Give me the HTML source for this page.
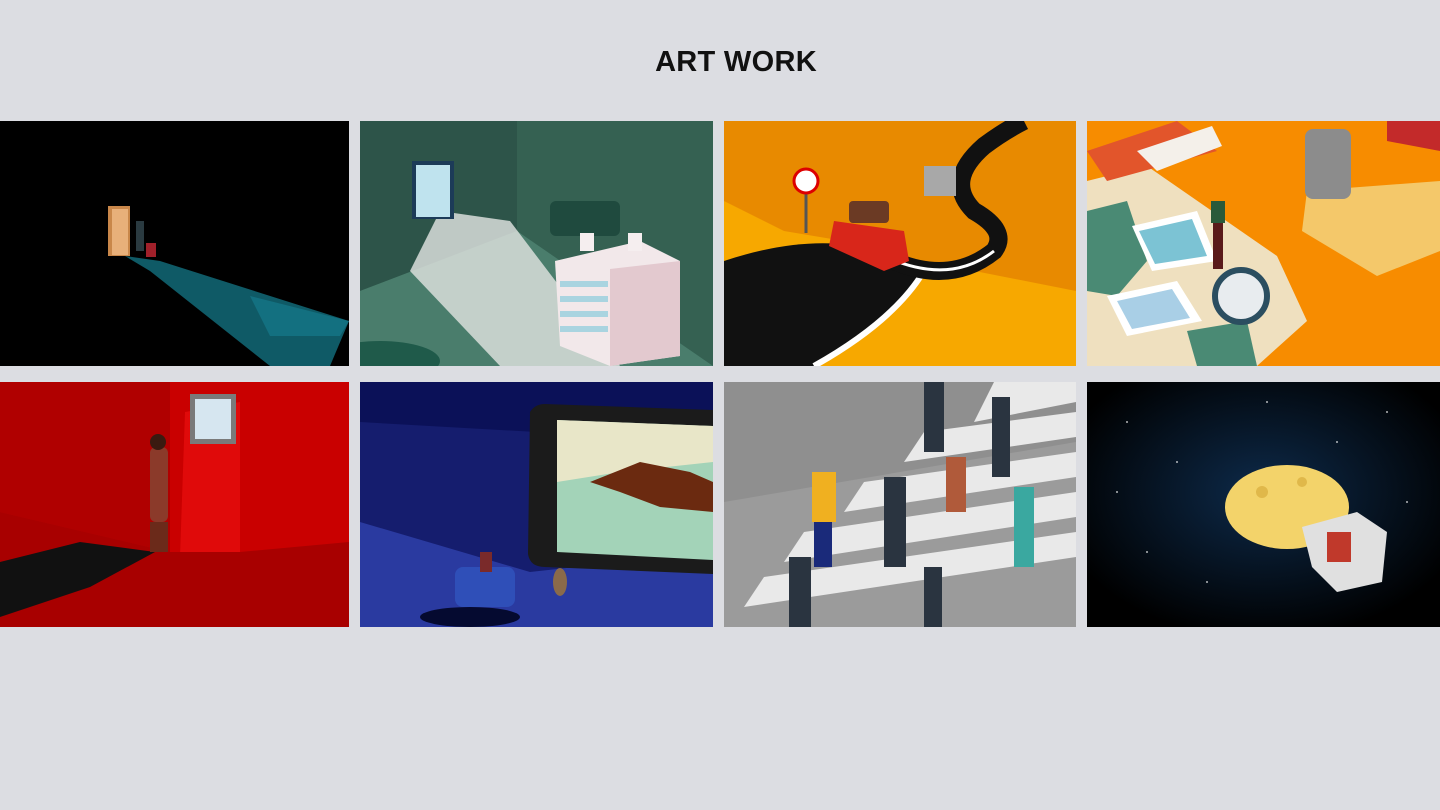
<!DOCTYPE html>
<html><head><meta charset="utf-8"><style>
html,body{margin:0;padding:0;width:1440px;height:810px;overflow:hidden;background:#dcdde2;}
h1{position:absolute;left:16px;width:1440px;top:46px;margin:0;text-align:center;font:bold 29px "Liberation Sans",sans-serif;color:#111;letter-spacing:0.3px}
svg.t{position:absolute;display:block}
</style></head><body>
<h1>ART WORK</h1>

<svg class="t" style="left:0;top:121px" width="349" height="245" viewBox="0 0 349 245">
<rect width="349" height="245" fill="#000"/>
<path d="M125 135 L160 140 L349 200 L330 245 L270 245 L150 150 Z" fill="#0f5a66"/>
<path d="M250 175 L349 200 L340 215 L270 215 Z" fill="#137080"/>
<rect x="108" y="85" width="22" height="50" fill="#c9874a"/>
<rect x="112" y="88" width="16" height="46" fill="#e8b07a"/>
<rect x="136" y="100" width="8" height="30" fill="#2a3a40"/>
<rect x="146" y="122" width="10" height="14" fill="#a0202a"/>
</svg>

<svg class="t" style="left:360px;top:121px" width="353" height="245" viewBox="0 0 353 245">
<rect width="353" height="245" fill="#3a6a5b"/>
<path d="M0 0 L157 0 L157 110 L0 170 Z" fill="#2d5449"/>
<path d="M157 0 L353 0 L353 245 L157 110 Z" fill="#356152"/>
<path d="M0 170 L157 110 L353 245 L0 245 Z" fill="#4a7d6c"/>
<path d="M50 150 L80 90 L150 100 L260 245 L140 245 Z" fill="#d9dedb" opacity="0.85"/>
<rect x="52" y="40" width="42" height="58" fill="#1c3b58"/>
<rect x="56" y="44" width="34" height="52" fill="#bfe3ee"/>
<rect x="190" y="80" width="70" height="35" rx="6" fill="#1f4a3e"/>
<path d="M195 140 L280 120 L320 140 L320 235 L250 245 L200 225 Z" fill="#f2e8ea"/>
<path d="M250 148 L320 140 L320 235 L250 245 Z" fill="#e3c9cf"/>
<g fill="#a9d4e0"><rect x="200" y="160" width="48" height="6"/><rect x="200" y="175" width="48" height="6"/><rect x="200" y="190" width="48" height="6"/><rect x="200" y="205" width="48" height="6"/></g>
<rect x="220" y="112" width="14" height="18" fill="#f5eeef"/><rect x="268" y="112" width="14" height="18" fill="#f5eeef"/>
<ellipse cx="20" cy="240" rx="60" ry="20" fill="#1f5a4a"/>
</svg>

<svg class="t" style="left:724px;top:121px" width="352" height="245" viewBox="0 0 352 245">
<rect width="352" height="245" fill="#e88a00"/>
<path d="M0 80 L60 110 L120 120 L200 140 L352 170 L352 245 L0 245 Z" fill="#f7a800"/>
<path d="M0 140 Q120 100 200 150 Q170 200 90 245 L0 245 Z" fill="#111"/>
<path d="M200 150 Q170 200 90 245" stroke="#fff" stroke-width="6" fill="none"/>
<path d="M150 130 Q220 170 270 130 Q285 110 250 90 Q220 60 260 25 Q280 10 300 0" stroke="#111" stroke-width="18" fill="none"/>
<path d="M160 135 Q225 165 270 130" stroke="#fff" stroke-width="3" fill="none"/>
<rect x="200" y="45" width="32" height="30" fill="#a8a8a8"/>
<path d="M110 100 L180 110 L185 140 L160 150 L105 125 Z" fill="#d8261a"/>
<rect x="125" y="80" width="40" height="22" rx="4" fill="#6b3a24"/>
<line x1="82" y1="60" x2="82" y2="112" stroke="#555" stroke-width="3"/>
<circle cx="82" cy="60" r="12" fill="#fff" stroke="#d00" stroke-width="3"/>
</svg>

<svg class="t" style="left:1087px;top:121px" width="353" height="245" viewBox="0 0 353 245">
<rect width="353" height="245" fill="#f78c00"/>
<path d="M0 60 L60 45 L190 135 L220 200 L170 245 L0 245 Z" fill="#efe0bf"/>
<path d="M0 90 L40 80 L60 140 L30 175 L0 170 Z" fill="#4a8a74"/>
<path d="M100 210 L160 200 L170 245 L110 245 Z" fill="#4a8a74"/>
<path d="M0 30 L90 0 L130 30 L20 60 Z" fill="#e2552b"/>
<path d="M50 30 L125 5 L135 25 L70 50 Z" fill="#f4f0ea"/>
<path d="M45 105 L110 90 L130 140 L65 150 Z" fill="#fff"/>
<path d="M52 110 L105 98 L120 135 L68 143 Z" fill="#7cc3d4"/>
<path d="M20 175 L90 160 L115 200 L40 215 Z" fill="#fff"/>
<path d="M30 180 L85 168 L103 197 L45 208 Z" fill="#a9cfe6"/>
<path d="M220 70 L353 60 L353 130 L290 155 L215 110 Z" fill="#f4c86a"/>
<rect x="218" y="8" width="46" height="70" rx="8" fill="#8c8c8c"/>
<circle cx="154" cy="175" r="26" fill="#e8ecef" stroke="#2b4e60" stroke-width="6"/>
<rect x="126" y="90" width="10" height="58" fill="#5a1a1a"/>
<rect x="124" y="80" width="14" height="22" fill="#2a5a3a"/>
<path d="M300 0 L353 0 L353 30 L300 20 Z" fill="#c32a2a"/>
</svg>

<svg class="t" style="left:0;top:382px" width="349" height="245" viewBox="0 0 349 245">
<rect width="349" height="245" fill="#c40000"/>
<path d="M0 0 L170 0 L170 170 L0 130 Z" fill="#b00000"/>
<path d="M170 0 L349 0 L349 160 L240 170 L170 170 Z" fill="#c90000"/>
<path d="M185 30 L240 20 L240 170 L180 175 Z" fill="#e00a0a"/>
<path d="M0 130 L170 170 L240 170 L349 160 L349 245 L0 245 Z" fill="#a80000"/>
<path d="M0 180 L80 160 L155 170 L90 205 L0 235 Z" fill="#111"/>
<rect x="190" y="12" width="46" height="50" fill="#7a7a7a"/>
<rect x="195" y="17" width="36" height="40" fill="#d6e6f0"/>
<rect x="150" y="65" width="18" height="75" rx="6" fill="#8b3a2a"/>
<circle cx="158" cy="60" r="8" fill="#3a1a10"/>
<rect x="150" y="140" width="18" height="30" fill="#6b2a1a"/>
</svg>

<svg class="t" style="left:360px;top:382px" width="353" height="245" viewBox="0 0 353 245">
<rect width="353" height="245" fill="#151d6e"/>
<path d="M0 0 L353 0 L353 60 L0 40 Z" fill="#0b1158"/>
<path d="M0 140 L170 190 L353 170 L353 245 L0 245 Z" fill="#2a3aa0"/>
<path d="M170 30 Q175 22 185 22 L353 28 L353 192 L185 185 Q170 185 168 172 Z" fill="#1b1b1b"/>
<path d="M197 38 L353 44 L353 178 L197 170 Z" fill="#a3d3b8"/>
<path d="M197 38 L353 44 L353 80 L260 90 L197 100 Z" fill="#e8e6c8"/>
<path d="M230 100 L280 80 L330 90 L353 100 L353 130 L300 125 L260 110 Z" fill="#6b2a10"/>
<rect x="95" y="185" width="60" height="40" rx="8" fill="#2f4fb8"/>
<rect x="120" y="170" width="12" height="20" fill="#7a2a2a"/>
<ellipse cx="200" cy="200" rx="7" ry="14" fill="#8a6a4a"/>
<ellipse cx="110" cy="235" rx="50" ry="10" fill="#050a30"/>
</svg>

<svg class="t" style="left:724px;top:382px" width="352" height="245" viewBox="0 0 352 245">
<rect width="352" height="245" fill="#8f8f8f"/>
<path d="M0 120 L352 60 L352 245 L0 245 Z" fill="#9b9b9b"/>
<g fill="#e9e9e9">
<path d="M270 0 L352 0 L352 20 L250 40 Z"/>
<path d="M200 50 L352 30 L352 55 L180 80 Z"/>
<path d="M140 100 L352 70 L352 95 L120 130 Z"/>
<path d="M80 150 L352 110 L352 135 L60 180 Z"/>
<path d="M40 195 L352 150 L352 175 L20 225 Z"/>
</g>
<g fill="#2a3440"><rect x="200" y="0" width="20" height="70"/><rect x="268" y="15" width="18" height="80"/><rect x="160" y="95" width="22" height="90"/><rect x="200" y="185" width="18" height="60"/><rect x="65" y="175" width="22" height="70"/></g>
<rect x="88" y="90" width="24" height="50" fill="#f0b020"/><rect x="90" y="140" width="18" height="45" fill="#1a2a7a"/>
<rect x="222" y="75" width="20" height="55" fill="#b05a3a"/>
<rect x="290" y="105" width="20" height="80" fill="#3aa8a0"/>
</svg>

<svg class="t" style="left:1087px;top:382px" width="353" height="245" viewBox="0 0 353 245">
<defs><radialGradient id="sp" cx="0.5" cy="0.45" r="0.6"><stop offset="0" stop-color="#0d2a4a"/><stop offset="1" stop-color="#000"/></radialGradient></defs>
<rect width="353" height="245" fill="url(#sp)"/>
<g fill="#fff" opacity="0.7"><circle cx="40" cy="40" r="1"/><circle cx="90" cy="80" r="1"/><circle cx="300" cy="30" r="1"/><circle cx="320" cy="120" r="1"/><circle cx="60" cy="170" r="1"/><circle cx="180" cy="20" r="1"/><circle cx="250" cy="60" r="1"/><circle cx="120" cy="200" r="1"/><circle cx="30" cy="110" r="1"/><circle cx="280" cy="200" r="1"/></g>
<ellipse cx="200" cy="125" rx="62" ry="42" fill="#f3d36a"/>
<circle cx="175" cy="110" r="6" fill="#e0b84a"/><circle cx="215" cy="100" r="5" fill="#e0b84a"/>
<path d="M215 145 L270 130 L300 150 L295 200 L250 210 L225 185 Z" fill="#e0e0e0"/>
<rect x="240" y="150" width="24" height="30" fill="#c0392b"/>
</svg>

</body></html>
